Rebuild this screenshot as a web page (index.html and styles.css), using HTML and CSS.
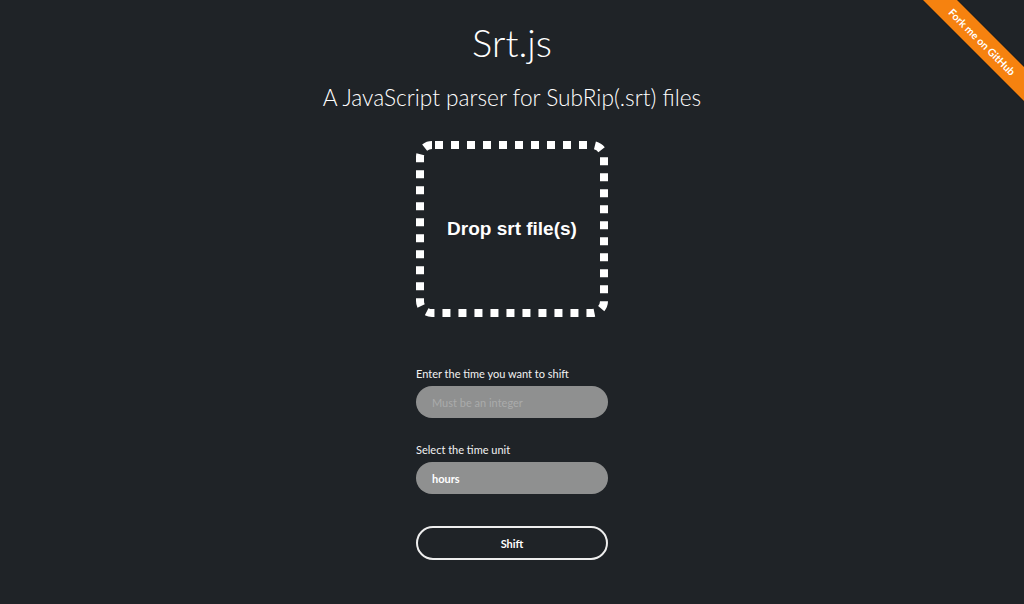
FILE: index.html
```html
<!DOCTYPE html>
<html>
<head>
<meta charset="utf-8">
<link rel="stylesheet" href="styles.css">
</head>
<body>
<a class="ribbon" href="#"><span class="ribbon-band">Fork me on GitHub</span></a>
<main class="page">
  <h1 class="title">Srt.js</h1>
  <h2 class="subtitle">A JavaScript parser for SubRip(.srt) files</h2>
  <div class="dropzone">
    <svg class="dropzone-border" width="192" height="176" viewBox="0 0 192 176">
      <rect x="4" y="4" width="184" height="168" rx="12" ry="12" fill="none" stroke="#ffffff" stroke-width="8" stroke-dasharray="8 8" stroke-dashoffset="-3"/>
    </svg>
    <span class="dropzone-text">Drop srt file(s)</span>
  </div>
  <form class="form">
    <label class="label">Enter the time you want to shift</label>
    <input class="field" type="text" placeholder="Must be an integer">
    <label class="label">Select the time unit</label>
    <div class="field select">hours</div>
    <button class="btn" type="button">Shift</button>
  </form>
</main>
</body>
</html>
```

FILE: styles.css
```css
html, body {
  margin: 0;
  padding: 0;
}
body {
  background: #1f2327;
  color: #fff;
  font-family: Lato, "Open Sans", sans-serif;
  height: 604px;
  overflow: hidden;
  position: relative;
}
.page {
  display: flex;
  flex-direction: column;
  align-items: center;
}
.title {
  margin: 19px 0 0;
  font-weight: 300;
  font-size: 38px;
  line-height: 46px;
  letter-spacing: 0;
}
.subtitle {
  margin: 19px 0 0;
  font-weight: 300;
  font-size: 22.7px;
  line-height: 28px;
}
.dropzone {
  margin-top: 29px;
  width: 192px;
  height: 176px;
  position: relative;
  display: flex;
  align-items: center;
  justify-content: center;
}
.dropzone-border {
  position: absolute;
  left: 0;
  top: 0;
}
.dropzone-text {
  font-family: "Liberation Sans", Arial, sans-serif;
  font-weight: bold;
  font-size: 19px;
  margin-top: 0;
}
.form {
  margin-top: 50px;
  width: 192px;
  display: flex;
  flex-direction: column;
}
.label {
  font-size: 11px;
  line-height: 14px;
  color: #f2f2f2;
  margin-bottom: 5px;
  margin-left: 0;
}
.field {
  box-sizing: border-box;
  width: 192px;
  height: 32px;
  border: none;
  border-radius: 16px;
  background: #8f9090;
  padding: 0 16px;
  font-family: Lato, sans-serif;
  font-size: 11px;
  color: #fff;
  outline: none;
  margin: 0 0 25px;
}
.field::placeholder {
  color: #aaabab;
}
.select {
  display: flex;
  align-items: center;
  font-weight: bold;
  margin-bottom: 30px;
}
.btn {
  box-sizing: border-box;
  width: 192px;
  height: 34px;
  border: 2px solid #eeeeee;
  border-radius: 17px;
  background: transparent;
  color: #fff;
  font-family: Lato, sans-serif;
  font-weight: bold;
  font-size: 11px;
  margin-top: 2px;
}
.ribbon {
  position: absolute;
  top: 0;
  right: 0;
  width: 101px;
  height: 101px;
  overflow: hidden;
  text-decoration: none;
}
.ribbon-band {
  position: absolute;
  left: -16px;
  top: 30px;
  width: 150px;
  height: 24px;
  background: #f6820f;
  color: #fff;
  font-family: Lato, sans-serif;
  font-weight: bold;
  font-size: 10.5px;
  line-height: 24px;
  text-align: center;
  transform: rotate(45deg);
  box-shadow: 0 0 2px rgba(0,0,0,0.4);
}
```
